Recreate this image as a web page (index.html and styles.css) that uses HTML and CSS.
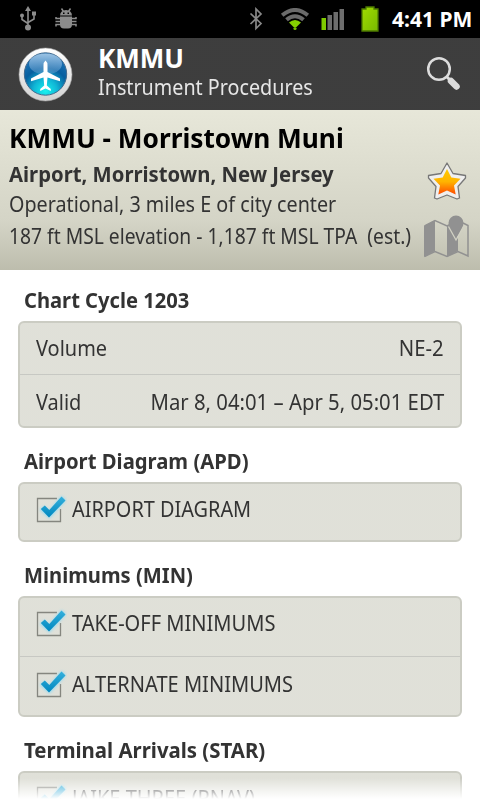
FILE: index.html
```
<!DOCTYPE html>
<html lang="en">
<head>
<meta charset="utf-8">
<title>KMMU Instrument Procedures</title>
<link rel="stylesheet" href="styles.css">
</head>
<body>
<svg width="0" height="0" class="defs">
  <defs>
    <linearGradient id="tick" x1="0" y1="0" x2="0" y2="1"><stop offset="0" stop-color="#35b0dc"/><stop offset="1" stop-color="#0087bf"/></linearGradient>
    <filter id="glow" x="-40%" y="-40%" width="180%" height="180%"><feGaussianBlur stdDeviation="1.8"/></filter>
    <symbol id="check" viewBox="0 0 32 32">
      <path d="M22 5.500H2.500V28.500H25.500V16" fill="none" stroke="#85867f" stroke-width="1.300"/>
      <path d="M6 17l3-3 5 5L26.500 4l3.500 3L14.500 24.500z" fill="#8fd9f2" stroke="#8fd9f2" stroke-width="1.500" filter="url(#glow)"/>
      <path d="M5.800 16l4-3.500 4.500 4.500L26.500 3.500l4 4L14 24.500z" fill="url(#tick)"/>
    </symbol>
  </defs>
</svg>
<div class="status">
  <svg width="20" height="28" viewBox="0 0 20 28" class="usb"><g fill="none" stroke="#8c8c8c" stroke-width="1.600"><path d="M10 5V23M4 11V14.500L10 18.500M16 10V14L10 17.500"/></g><g fill="#8c8c8c"><path d="M10 1l3 5H7z"/><circle cx="4" cy="10.500" r="2"/><path d="M14 6.500h4v4h-4z"/><circle cx="10" cy="22.500" r="3"/></g></svg>
  <svg width="22" height="22" viewBox="0 0 22 22" class="bug"><g fill="#8c8c8c"><path d="M5 7.500a6 5.500 0 0 1 12 0z"/><path d="M5 8.500h12v8q0 4-4 4H9q-4 0-4-4z"/></g><path d="M6.500 .5l2 3M15.500 .5l-2 3M5 10.500H1V9M5 13.500H.5M5 16.500H1v2M17 10.500h4V9M17 13.500h4.500M17 16.500h4v2" fill="none" stroke="#8c8c8c" stroke-width="1.500"/><path d="M8 4.500h1.500V6H8zM12.500 4.500H14V6h-1.500z" fill="#000"/></svg>
  <span class="fill"></span>
  <svg width="14" height="24" viewBox="0 0 14 24" class="bt"><path d="M1.500 6.500L12 16.500 7 21.500V2l5 5L1.500 17" fill="none" stroke="#888" stroke-width="1.700"/></svg>
  <svg width="30" height="24" viewBox="0 0 30 24" class="wifi"><g fill="none" stroke="#6b6b6b" stroke-width="4"><path d="M2.200 7.200Q15-3.200 27.800 7.200"/><path d="M6.500 11.800Q15 4.700 23.500 11.800"/></g><path d="M9 14.500Q15 9.500 21 14.500L16.500 19h-3z" fill="#86d000"/><circle cx="15" cy="20.500" r="1.600" fill="#78be00"/></svg>
  <svg width="24" height="22" viewBox="0 0 24 22" class="signal"><path d="M.5 10h4.500v12H.5z" fill="#7fca00"/><path d="M6.500 7h4.500v15H6.500zM12.500 4h4.500v18h-4.500zM18.500 1H23v21h-4.500z" fill="#6d6d6d"/></svg>
  <svg width="20" height="26" viewBox="0 0 20 26" class="battery"><defs><linearGradient id="bat" x1="0" y1="0" x2="1" y2="1"><stop offset="0" stop-color="#a0dc00"/><stop offset="1" stop-color="#78b800"/></linearGradient></defs><path d="M2 3h4V1h8v2h4v22H2z" fill="url(#bat)" stroke="#4d7a00" stroke-width="1.300"/></svg>
  <span class="clock">4:41 PM</span>
</div>
<header class="bar">
  <svg width="56" height="56" viewBox="0 0 56 56" class="logo"><defs><linearGradient id="ring" x1="0" y1="0" x2="0" y2="1"><stop offset="0" stop-color="#fff"/><stop offset="1" stop-color="#d2d2d2"/></linearGradient><radialGradient id="sky" cx=".5" cy=".9" r=".8"><stop offset="0" stop-color="#19f2ee"/><stop offset=".35" stop-color="#10b6d6"/><stop offset=".68" stop-color="#075f9f"/><stop offset="1" stop-color="#1c71b4"/></radialGradient><linearGradient id="shine" x1="0" y1="0" x2="0" y2="1"><stop offset="0" stop-color="#bcd8f0" stop-opacity=".8"/><stop offset="1" stop-color="#74a8d8" stop-opacity=".35"/></linearGradient></defs>
    <circle cx="28.500" cy="28.500" r="26.500" fill="url(#ring)" stroke="#a5a5a5" stroke-width=".6"/><circle cx="28.500" cy="28" r="21.200" fill="url(#sky)" stroke="#426a8e"/><ellipse cx="28.500" cy="18" rx="16.500" ry="10.500" fill="url(#shine)"/>
    <path d="M28.500 14.500q2 1.500 2 5v6.500l12.500 6.500v2.700L30.500 31.500l-.7 8 4 3.500v2L28.500 42.500 23.200 45v-2l4-3.500-.7-8-12.500 3.700v-2.700L26.500 26v-6.500q0-3.500 2-5z" fill="#fff"/></svg>
  <div class="names"><div class="code">KMMU</div><div class="sub">Instrument Procedures</div></div>
  <svg width="36" height="36" viewBox="0 0 36 36" class="search"><circle cx="13" cy="13" r="10.800" fill="none" stroke="#dcdcdc" stroke-width="2.500"/><path d="M20.500 20.500l4 4" stroke="#dcdcdc" stroke-width="3"/><path d="M25 25l5.500 5.500" stroke="#dcdcdc" stroke-width="6.500" stroke-linecap="round"/></svg>
</header>
<section class="info">
  <div class="facts">
    <h1 class="title">KMMU - Morristown Muni</h1>
    <div class="place">Airport, Morristown, New Jersey</div>
    <div class="oper">Operational, 3 miles E of city center</div>
    <div class="elev">187 ft MSL elevation - 1,187 ft MSL TPA &nbsp;(est.)</div>
  </div>
  <div class="actions">
    <svg width="42" height="42" viewBox="0 0 42 42"><defs><linearGradient id="gold" x1="0" y1="0" x2="0" y2="1"><stop offset="0" stop-color="#ffca00"/><stop offset=".5" stop-color="#ffb400"/><stop offset="1" stop-color="#ff4a00"/></linearGradient></defs><path d="M21 3L27 13.500 39.500 15.500V18L32 26.500 33.500 38 31 39 21 35 11 39 8.500 38 10 26.500 2.500 18V15.500L15 13.500z" fill="#efefef" stroke="#777" stroke-width="1.300" stroke-linejoin="round"/><path d="M21 9l4.300 8.500 9.200 1.200-6.500 6.800 1.700 9L21 30.500l-8.700 4 1.700-9-6.500-6.800 9.200-1.200z" fill="url(#gold)"/></svg>
    <svg width="48" height="44" viewBox="0 0 48 44" class="map"><path d="M2 11L13 5V36L2 42zM25 11l4-2 7 15V36l-11 6z" fill="#919191"/><path d="M2.500 11L13 5.500 25 11 30 8.500M41 8l5 2.500V41L36 36.500 25 41.500 13 36.500 2.500 41.500" fill="none" stroke="#919191" stroke-width="1.500"/><path d="M34 23.500Q26.500 13 26.500 8a7.500 7.500 0 0 1 15 0q0 5-7.500 15.500z" fill="#919191"/><path d="M26.500 11.500L34 25l7.500-13.500" fill="none" stroke="#d2d2c4" stroke-width="1.300"/></svg>
  </div>
</section>
<main class="list">
  <h2 class="head w1">Chart Cycle 1203</h2>
  <div class="card">
    <div class="row short"><span class="k1">Volume</span><span class="v1">NE-2</span></div>
    <div class="row short"><span class="k2">Valid</span><span class="v2">Mar 8, 04:01 – Apr 5, 05:01 EDT</span></div>
  </div>
  <h2 class="head w2">Airport Diagram (APD)</h2>
  <div class="card">
    <div class="row single"><svg class="box"><use href="#check"/></svg><span class="c1">AIRPORT DIAGRAM</span></div>
  </div>
  <h2 class="head w3">Minimums (MIN)</h2>
  <div class="card">
    <div class="row"><svg class="box"><use href="#check"/></svg><span class="c2">TAKE-OFF MINIMUMS</span></div>
    <div class="row"><svg class="box"><use href="#check"/></svg><span class="c3">ALTERNATE MINIMUMS</span></div>
  </div>
  <h2 class="head w4">Terminal Arrivals (STAR)</h2>
  <div class="card">
    <div class="row"><svg class="box"><use href="#check"/></svg><span class="c4">JAIKE THREE (RNAV)</span></div>
  </div>
</main>
<div class="fade"></div>
</body>
</html>
```
FILE: styles.css
```
* { box-sizing: border-box; }
body { margin: 0; width: 480px; height: 800px; overflow: hidden; background: #fff; color: #333; font-family: "Noto Sans", "Open Sans", sans-serif; font-size: 22px; line-height: 28px; white-space: nowrap; display: flex; flex-direction: column; position: relative; }
svg { display: block; flex: none; }
.defs { position: absolute; }
h1, h2 { margin: 0; font-weight: 700; }
.status { height: 38px; flex: none; background: #000; display: flex; align-items: flex-start; padding: 5px 10px 0 18px; }
.bug { margin: 3px 0 0 17px; }
.fill { flex: 1; }
.bt { margin: 2px 17px 0 0; }
.wifi { margin: 3px 11px 0 0; }
.signal { margin: 3px 14px 0 0; }
.battery { margin: 1px 12px 0 1px; }
.clock { color: #fff; font-weight: 700; font-size: 21px; line-height: 29px; width: 78px; }
.bar { height: 72px; flex: none; display: flex; padding: 8px 18px 0 17px; background: radial-gradient(circle, #3c3c3c 0.6px, transparent 1px) 0 0 / 2px 2px, #444; color: #fff; }
.names { flex: 1; padding-left: 25px; }
.code { font-size: 26px; font-weight: 700; line-height: 28px; margin-top: -2px; }
.sub { color: #e6e6e6; }
.search { margin-top: 10px; }
.info { height: 160px; flex: none; display: flex; padding: 10px 0 0 9px; background: linear-gradient(#e7e7d9, #d4d4c6 70%, #bdbdad); }
.facts { width: 415px; flex: none; }
.title { color: #000; font-size: 27px; line-height: 36px; }
.place { font-size: 21px; font-weight: 700; line-height: 30px; margin-top: 3px; }
.oper { margin-top: 0; }
.elev { margin-top: 4px; }
.actions { width: 48px; padding-top: 40px; flex: none; }
.actions svg:first-child { margin-left: 2px; }
.map { margin: 13px 0 0 -2px; }
.list { padding: 0 18px; }
.head { height: 54px; padding: 18px 6px 6px; font-size: 21px; line-height: 30px; }
.head.w1 { height: 51px; padding-top: 15px; }
.card { border: 2px solid #cbccc3; border-radius: 6px; background: radial-gradient(circle, #e1e2da 0.6px, transparent 1px) 0 0 / 2px 2px, #dddfd7; }
.row { display: flex; height: 58px; padding: 10px 16px 0; }
.row + .row { height: 59px; padding-top: 12px; border-top: 1px solid #c7c8c3; }
.row.single { height: 56px; }
.row.short { height: 51px; justify-content: space-between; }
.row.short + .row.short { height: 52px; }
.box { width: 32px; height: 32px; margin: -1px 5px 0 -1px; }
.fade { position: absolute; left: 0; right: 0; bottom: 0; height: 22px; background: linear-gradient(rgba(255,255,255,0), rgba(255,255,255,.5) 45%, #fff 95%); }

/* condensed lettering */
.sub, .title, .place, .oper, .elev, .row span { transform-origin: 0 50%; }
.head { transform-origin: 6px 50%; }
.sub { transform: scaleX(.897); }
.title { transform: scaleX(.972); }
.place { transform: scaleX(.966); }
.oper { transform: scaleX(.897); }
.elev { transform: scaleX(.876); }
.head { transform: scaleX(.965); }
.w1, .w3 { transform: scaleX(.96); }
.w4 { transform: scaleX(.971); }
.row .k1, .row .k2 { transform: scaleX(.907); }
.row .v1, .row .v2 { transform-origin: 100% 50%; transform: scaleX(.923); }
.row .c1 { transform: scaleX(.904); }
.row .c2, .row .c3 { transform: scaleX(.912); }
.row .c4 { transform: scaleX(.908); }
```
